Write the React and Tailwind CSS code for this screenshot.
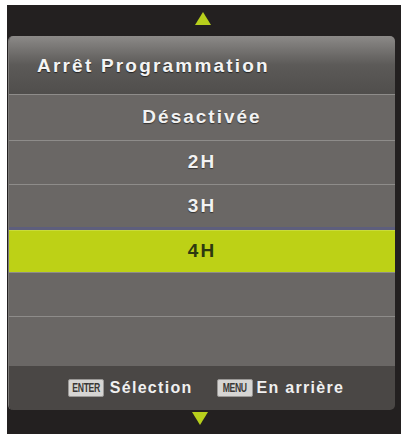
const font = { fontFamily: '"Liberation Sans", Arial, sans-serif' };

function Arrow({ down }) {
  return (
    <svg width="16" height="13" viewBox="0 0 16 13">
      <polygon points={down ? "0,0 16,0 8,13" : "8,0 16,13 0,13"} fill="#b7cf1c" />
    </svg>
  );
}

function Key({ label }) {
  return (
    <span className="flex items-center justify-center w-[36px] h-[18px] rounded-[2px] bg-[#d6d5d3] border border-[#9a9896] overflow-hidden">
      <span className="text-[#3a3836] text-[12px] font-bold tracking-[-0.5px] leading-none inline-block scale-x-[0.72]">
        {label}
      </span>
    </span>
  );
}

function Row({ label, h, active }) {
  return (
    <div
      className={
        "flex items-center justify-center border-t font-bold text-[19px] tracking-[2px] " +
        (active
          ? "bg-[#bdd116] border-[#c9dc3a] text-[#2e3a10]"
          : "bg-[#6a6765] border-[#8e8c8a] text-[#f2f2f2] [text-shadow:0_1px_1px_rgba(0,0,0,0.5)]")
      }
      style={{ height: h }}
    >
      {label}
    </div>
  );
}

export default function App() {
  return (
    <div className="w-[401px] h-[437px] bg-white pt-[5px] pl-[7px]" style={font}>
      <div className="w-[394px] h-[429px] bg-[#232020] flex flex-col">
        <div className="h-[31px] flex justify-center pt-[7px] pr-[2px]">
          <Arrow />
        </div>
        <div className="ml-[1px] w-[387px] h-[374px] rounded-[5px] overflow-hidden flex flex-col border-l border-[#7d7b79]">
          <div className="h-[58px] bg-gradient-to-b from-[#8c8a88] via-[#5c5a58] to-[#504e4c] flex items-center pl-[28px] pt-[2px] text-[19px] font-bold tracking-[2.2px] text-[#f4f4f4] [text-shadow:0_1px_1px_rgba(0,0,0,0.6)]">
            Arrêt Programmation
          </div>
          <Row label="Désactivée" h={46} />
          <Row label="2H" h={44} />
          <Row label="3H" h={43} />
          <div className="h-[3px] bg-[#5d5e7c]" />
          <Row label="4H" h={42} active />
          <Row label="" h={44} />
          <Row label="" h={50} />
          <div className="h-[44px] bg-[#4a4745] flex items-center justify-center gap-[24px] pl-[8px] text-[16px] font-bold tracking-[1.3px] text-[#f0f0f0]">
            <div className="flex items-center gap-[6px]">
              <Key label="ENTER" />
              <span>Sélection</span>
            </div>
            <div className="flex items-center gap-[4px]">
              <Key label="MENU" />
              <span>En arrière</span>
            </div>
          </div>
        </div>
        <div className="flex justify-center pt-[2px] pr-[8px]">
          <Arrow down />
        </div>
      </div>
    </div>
  );
}
